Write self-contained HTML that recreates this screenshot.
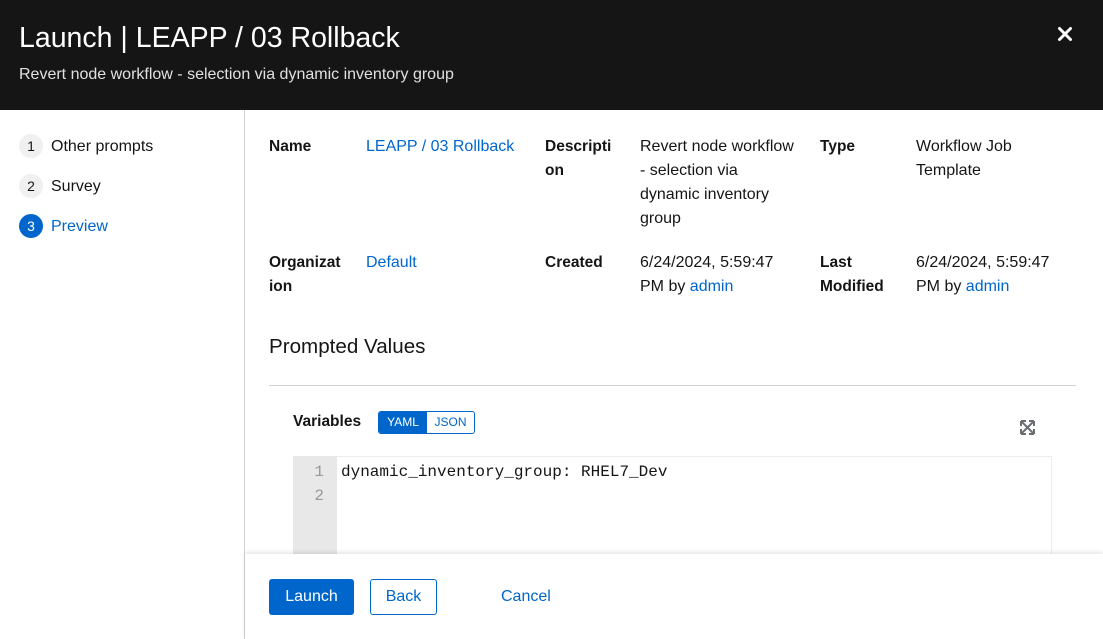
<!DOCTYPE html>
<html><head><style>
*{margin:0;padding:0;box-sizing:border-box}
body{width:1103px;height:639px;overflow:hidden;background:#fff;font-family:"Liberation Sans",sans-serif;color:#151515;position:relative}
.a{position:absolute}
.hdr{left:0;top:0;width:1103px;height:110px;background:#151515;color:#fff}
.lbl{font-weight:bold;font-size:15.5px;line-height:24px}
.val{font-size:16px;line-height:24px}
a{color:#0066cc;text-decoration:none}
.step{left:19px;width:24px;height:24px;border-radius:50%;background:#f0f0f0;font-size:14px;text-align:center;line-height:24px;color:#151515}
.st{left:51px;font-size:16px;line-height:20px}
</style></head><body>
<div class="a hdr">
<div class="a" style="left:19px;top:21px;font-size:28.5px;line-height:34px">Launch | LEAPP / 03 Rollback</div>
<div class="a" style="left:19px;top:65px;font-size:16px;line-height:20px;color:#e0e0e0">Revert node workflow - selection via dynamic inventory group</div>
<svg class="a" style="left:1057px;top:26px" width="16" height="16" viewBox="0 0 16 16"><path d="M2.5 2.5L13.5 13.5M13.5 2.5L2.5 13.5" stroke="#fff" stroke-width="3" stroke-linecap="round"/></svg>
</div>
<div class="a" style="left:244px;top:110px;width:1px;height:529px;background:#d2d2d2"></div>
<div class="a step" style="top:134px">1</div><div class="a st" style="top:137px">Other prompts</div>
<div class="a step" style="top:174px">2</div><div class="a st" style="top:177px">Survey</div>
<div class="a step" style="top:214px;background:#0066cc;color:#fff">3</div><div class="a st" style="top:217px;color:#0066cc">Preview</div>

<div class="a lbl" style="left:269px;top:135px">Name</div>
<div class="a val" style="left:366px;top:135px"><a>LEAPP / 03 Rollback</a></div>
<div class="a lbl" style="left:545px;top:135px;width:80px">Descripti<br>on</div>
<div class="a val" style="left:640px;top:135px;width:160px">Revert node workflow - selection via dynamic inventory group</div>
<div class="a lbl" style="left:820px;top:135px">Type</div>
<div class="a val" style="left:916px;top:135px;width:130px">Workflow Job Template</div>

<div class="a lbl" style="left:269px;top:251px">Organizat<br>ion</div>
<div class="a val" style="left:366px;top:251px"><a>Default</a></div>
<div class="a lbl" style="left:545px;top:251px">Created</div>
<div class="a val" style="left:640px;top:251px">6/24/2024, 5:59:47<br>PM by <a>admin</a></div>
<div class="a lbl" style="left:820px;top:251px">Last<br>Modified</div>
<div class="a val" style="left:916px;top:251px">6/24/2024, 5:59:47<br>PM by <a>admin</a></div>

<div class="a" style="left:269px;top:334px;font-size:20.6px;line-height:26px">Prompted Values</div>
<div class="a" style="left:269px;top:385px;width:807px;height:1px;background:#d2d2d2"></div>
<div class="a lbl" style="left:293px;top:410px">Variables</div>
<div class="a" style="left:378px;top:411px;width:97px;height:23px;border:1px solid #0066cc;border-radius:3px;overflow:hidden;font-size:12px;line-height:21px">
<div class="a" style="left:0;top:0;width:48px;height:21px;background:#0066cc;color:#fff;text-align:center">YAML</div>
<div class="a" style="left:48px;top:0;width:47px;height:21px;color:#0066cc;text-align:center">JSON</div></div>
<svg class="a" style="left:1020px;top:420px" width="15" height="15" viewBox="0 0 15 15" fill="none" stroke="#6a6e73" stroke-width="2"><path d="M2 2L13 13M13 2L2 13"/><path d="M1 1h5M1 1v5M14 1h-5M14 1v5M1 14h5M1 14v-5M14 14h-5M14 14v-5"/></svg>
<div class="a" style="left:293px;top:456px;width:759px;height:110px;border:1px solid #ececec"></div>
<div class="a" style="left:293px;top:456px;width:44px;height:110px;background:#e8e8e8;font-family:'Liberation Mono',monospace;font-size:16px;line-height:24px;color:#999;text-align:right;padding:4px 13px 0 0">1<br>2</div>
<div class="a" style="left:341px;top:460px;font-family:'Liberation Mono',monospace;font-size:16px;line-height:24px">dynamic_inventory_group: RHEL7_Dev</div>
<div class="a" style="left:245px;top:554px;width:858px;height:85px;background:#fff;box-shadow:0 -2px 4px rgba(0,0,0,.1)"></div>
<div class="a" style="left:269px;top:579px;width:85px;height:36px;background:#0066cc;color:#fff;border-radius:3px;font-size:16px;text-align:center;line-height:36px">Launch</div>
<div class="a" style="left:370px;top:579px;width:67px;height:36px;border:1px solid #0066cc;color:#0066cc;border-radius:3px;font-size:16px;text-align:center;line-height:34px">Back</div>
<div class="a" style="left:501px;top:586px;color:#0066cc;font-size:16px;line-height:22px">Cancel</div>
</body></html>
